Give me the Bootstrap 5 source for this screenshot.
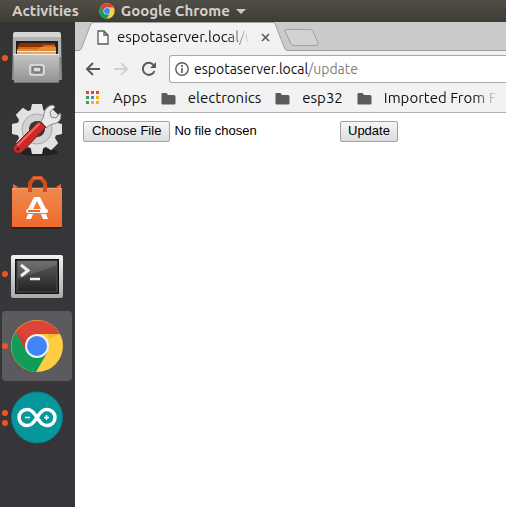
<!DOCTYPE html>
<html lang="en">
<head>
<meta charset="utf-8">
<meta name="viewport" content="width=device-width, initial-scale=1">
<title>espotaserver.local/update</title>
<link href="https://cdn.jsdelivr.net/npm/bootstrap@5.3.0/dist/css/bootstrap.min.css" rel="stylesheet">
<style>
body { font-family: Ubuntu, "Noto Sans", sans-serif; font-size: 15px; line-height: 20px; color: #111; }
svg { display: block; flex: none; }
button { font: inherit; color: inherit; }
.plain { background: none; border: 0; padding: 0; }
.topbar { height: 22px; background: linear-gradient(#504e46, #3e3c36); color: #d3d0c9; font-weight: 700; line-height: 18px; padding: 0 12px; gap: 20px; }
.topbar button { line-height: 18px; gap: 6px; }
.dock { width: 75px; background: linear-gradient(#323434, #37373b 60%, #353438); padding: 1px 3px 0 2px; gap: 2px; }
.launcher { height: 70px; border-radius: 4px; }
.launcher.active { background: #5b5b5e; }
.dots { left: 0; top: 0; bottom: 0; gap: 4px; }
.dots i { width: 6px; height: 6px; border-radius: 50%; background: #f05423; }
.tabstrip { height: 29px; background: #cacaca; box-shadow: inset 0 -1px #a0a0a0; }
.lead-in { width: 4px; }
.page-tab { width: 180px; background: #f2f2f2; border-top: 1px solid #a0a0a0; padding: 0 4px; gap: 8px; }
.tab-title { white-space: nowrap; -webkit-mask-image: linear-gradient(90deg, #000 80%, transparent 98%); mask-image: linear-gradient(90deg, #000 80%, transparent 98%); }
.newtab { margin: 0 0 0 -3px; }
.toolbar { height: 35px; background: #f2f2f2; padding-left: 10px; gap: 12px; }
.address { height: 28px; background: #fff; border: 1px solid #a9a9a9; border-right: 0; border-radius: 3px 0 0 3px; padding-left: 5px; gap: 5px; font-size: 14px; }
.address span span { color: #808080; }
.bookmarks { height: 27px; background: #f2f2f2; border-bottom: 1px solid #b0b0b0; padding: 0 0 2px 11px; gap: 14px; white-space: nowrap; }
.bookmarks a { color: #111; gap: 12px; }
.bookmarks a:first-child { gap: 13px; }
.fade-end { -webkit-mask-image: linear-gradient(90deg, #000 80%, transparent); mask-image: linear-gradient(90deg, #000 80%, transparent); }
.upload { font: 13px/16px Arial, "Liberation Sans", sans-serif; color: #000; padding: 8px; gap: 4px; }
.upload input[type=file] { width: 253px; font: inherit; height: 21px; }
.upload input::file-selector-button, .upload button { font: inherit; color: #000; height: 21px; padding: 0 7px 1px; border: 1px solid #a0a0a0; border-radius: 2px; background: linear-gradient(#f6f6f6, #dcdcdc); }
.upload input::file-selector-button { margin-right: 4px; padding: 0 8px 1px; }
</style>
</head>
<body class="vh-100 d-flex flex-column overflow-hidden">
<svg width="0" height="0" class="position-absolute" aria-hidden="true">
  <defs>
    <symbol id="chrome" viewBox="0 0 54 54">
      <circle cx="27" cy="27" r="26" fill="#ffcd40"/>
      <path d="M27 15H50A26 26 0 0 0 5.500 13L16 33 27 27Z" fill="#db4437"/>
      <path d="M5.500 13A26 26 0 0 0 26 53L37.500 33 27 27 16.500 33Z" fill="#0f9d58"/>
      <path d="M38 15H50L39 20Z" fill="#e2ad32" opacity=".6"/>
      <path d="M5.500 13 15.500 31 16 21Z" fill="#ab3830" opacity=".4"/>
      <circle cx="27" cy="27" r="12" fill="#f1f1f1"/><circle cx="27" cy="27" r="10" fill="#4285f4"/>
    </symbol>
    <symbol id="folder" viewBox="0 0 15 13"><path d="M1.500 1H5.500L7 3H13Q14.500 3 14.500 4.500V11Q14.500 12.500 13 12.500H1.500Q.500 12.500 .500 11V2Q.500 1 1.500 1Z" fill="#5a5a5a"/></symbol>
    <linearGradient id="steel" x2="0" y2="1"><stop stop-color="#c6c6c6"/><stop offset="1" stop-color="#929292"/></linearGradient>
    <linearGradient id="bag" x2="0" y2="1"><stop stop-color="#ed8950"/><stop offset="1" stop-color="#f06a2c"/></linearGradient>
    <linearGradient id="screen" x2="0" y2="1"><stop stop-color="#5d5d5d"/><stop offset="1" stop-color="#222"/></linearGradient>
    <linearGradient id="frame" x2="0" y2="1"><stop stop-color="#f2f2f2"/><stop offset="1" stop-color="#a9a9a9"/></linearGradient>
  </defs>
</svg>

<header class="topbar d-flex align-items-center flex-shrink-0">
  <button class="plain">Activities</button>
  <button class="plain d-flex align-items-center"><svg width="16" height="16"><use href="#chrome"/></svg>Google Chrome<svg width="10" height="5" viewBox="0 0 10 5"><path d="M0 0H10L5 5Z" fill="#ccc9c2"/></svg></button>
</header>

<div class="d-flex flex-grow-1">
  <nav class="dock d-flex flex-column flex-shrink-0" aria-label="Dock">
    <button class="plain launcher position-relative d-flex align-items-center justify-content-center" aria-label="Files">
      <span class="dots position-absolute d-flex flex-column justify-content-center"><i></i></span>
      <svg width="54" height="54" viewBox="0 0 54 54"><path d="M5 1H49Q51 1 51 3L52 49H2L3 3Q3 1 5 1Z" fill="#8f8f8f"/><path d="M5 1H49Q51 1 51 6H3Q3 1 5 1Z" fill="#d6d6d6"/><path d="M3 6H51V26H3Z" fill="#b2b2b2"/><path d="M6 10H48V25H6Z" fill="#202020"/><path d="M8 14 10 12H45V19H8Z" fill="#8d3000"/><path d="M8 16H32L34 14H45V24H8Z" fill="#cf6922"/><path d="M7 18H28L30 16H46V24H7Z" fill="#e08c3c"/><path d="M7 20H46V24H7Z" fill="#eaa762"/><path d="M7 20H46V21H7Z" fill="#fbe6c8"/><path d="M4 23H49V51H4Z" fill="url(#steel)"/><path d="M4 23H49V24H4Z" fill="#eee"/><path d="M4 51H49V52H4Z" fill="#777"/><rect x="20" y="34" width="14" height="10" rx="2" fill="#999" stroke="#e8e8e8" stroke-width="1.500"/><rect x="23" y="36" width="8" height="5" rx="1" fill="#ddd" stroke="#555"/></svg>
    </button>
    <button class="plain launcher d-flex align-items-center justify-content-center" aria-label="Settings">
      <svg width="54" height="54" viewBox="0 0 54 54"><ellipse cx="28" cy="49" rx="20" ry="4" fill="#222"/><g fill="#e2e2e2"><circle cx="27" cy="26" r="20"/><g id="teeth"><path d="M20 10 22 1H32L34 10V42L32 51H22L20 42Z"/></g><use href="#teeth" transform="rotate(45 27 26)"/><use href="#teeth" transform="rotate(90 27 26)"/><use href="#teeth" transform="rotate(135 27 26)"/></g><circle cx="27" cy="26" r="15" fill="#d2d2d2" stroke="#aaa"/><circle cx="27" cy="26" r="8" fill="#343637"/><path d="M31 18Q34 15 34 11 35 3 43 2L45 4 40 9 41 14 46 15 50 10 51 12Q51 20 43 21 39 22 36 25Z" fill="#e9e9e9" stroke="#888"/><path d="M29 18 36 24 13 48Q9 52 5 49 1 45 6 41Z" fill="#c92b28" stroke="#811a18"/><path d="M29 21 8 42" stroke="#ed6b60" stroke-width="2" stroke-linecap="round"/><circle cx="8" cy="46" r="1.500" fill="#35292a"/></svg>
    </button>
    <button class="plain launcher d-flex align-items-center justify-content-center" aria-label="Ubuntu Software">
      <svg width="54" height="54" viewBox="0 0 54 54"><path d="M2 51H52V54H2Z" fill="#242526"/><path d="M3 9 8 12H46L51 9V15H3Z" fill="#b43a15"/><path d="M3 9 8 12 3 14ZM51 9 46 12 51 14Z" fill="#ed6530"/><path d="M2 13H52V52H2Z" fill="url(#bag)"/><path d="M2 13H52V14H2Z" fill="#f49a66"/><path d="M20 17V8L24 3H31L35 8V17" fill="none" stroke="#d24c1e" stroke-width="4"/><path d="M23 3H32" stroke="#f06c37" stroke-width="2"/><path d="M24 22H30L36 34H31L27 26 23 34H18ZM18 39H23L21 44H16ZM31 39H36L38 44H33Z" fill="#fff"/><rect x="16" y="34" width="22" height="4" rx="2" fill="#fff"/><path d="M18 35H30V37H18Z" fill="#ed6b2e"/></svg>
    </button>
    <button class="plain launcher position-relative d-flex align-items-center justify-content-center" aria-label="Terminal">
      <span class="dots position-absolute d-flex flex-column justify-content-center"><i></i></span>
      <svg width="54" height="54" viewBox="0 0 54 54"><rect x="1" y="8" width="52" height="43" rx="2" fill="url(#frame)"/><rect x="5" y="12" width="44" height="35" fill="#111"/><rect x="7" y="14" width="40" height="31" fill="url(#screen)" stroke="#555"/><path d="M8 32 47 18V14H8Z" fill="#fff" opacity=".12"/><path d="M11 18 18 23.500 11 29" fill="none" stroke="#eee" stroke-width="3"/><path d="M20 32H30" stroke="#eee" stroke-width="2.500"/></svg>
    </button>
    <button class="plain launcher active position-relative d-flex align-items-center justify-content-center" aria-label="Google Chrome">
      <span class="dots position-absolute d-flex flex-column justify-content-center"><i></i></span>
      <svg width="54" height="54"><use href="#chrome"/></svg>
    </button>
    <button class="plain launcher position-relative d-flex align-items-center justify-content-center" aria-label="Arduino IDE">
      <span class="dots position-absolute d-flex flex-column justify-content-center"><i></i><i></i></span>
      <svg width="54" height="54" viewBox="0 0 54 54"><circle cx="27" cy="26.500" r="25.500" fill="#06979c" stroke="#087f85"/><path d="M27 26.500C23 20.500 21 18.500 17 18.500A8 8 0 0 0 17 34.500C21 34.500 23 32.500 27 26.500 31 20.500 33 18.500 37 18.500A8 8 0 0 1 37 34.500C33 34.500 31 32.500 27 26.500Z" fill="none" stroke="#fff" stroke-width="3.500"/><path d="M15 26.500H20M34 26.500H39M36.500 24V29" stroke="#fff" stroke-width="1.500"/></svg>
    </button>
  </nav>

  <div class="d-flex flex-column flex-grow-1 bg-white overflow-hidden">
    <div class="tabstrip d-flex flex-shrink-0">
      <div class="lead-in"></div>
      <svg width="14" height="29" viewBox="0 0 14 29"><path d="M0 29 2 27 12 2 14 .500V29Z" fill="#f2f2f2"/><path d="M0 28.500Q2 28 3 25L11 4Q12 .500 14 .500" fill="none" stroke="#a0a0a0"/></svg>
      <div class="page-tab d-flex align-items-center">
        <svg width="12" height="15" viewBox="0 0 12 15"><path d="M1 1H7L11 5V14H1ZM7 1V5H11" fill="#fafafa" stroke="#5a5a5a" stroke-width="1.300"/></svg>
        <span class="tab-title">espotaserver.local/u</span>
        <button class="plain ms-auto" aria-label="Close tab"><svg width="9" height="9" viewBox="0 0 9 9"><path d="M1 1 8 8M8 1 1 8" stroke="#5a5a5a" stroke-width="1.600"/></svg></button>
      </div>
      <svg width="14" height="29" viewBox="0 0 14 29"><path d="M0 .500 2 2 12 27 14 29H0Z" fill="#f2f2f2"/><path d="M0 .500Q2 .500 3 4L11 25Q12 28 14 28.500" fill="none" stroke="#a0a0a0"/></svg>
      <button class="plain newtab" aria-label="New tab"><svg width="36" height="29" viewBox="0 0 36 29"><path d="M2 7.500H26Q28 7.500 29 9.500L34 21Q34.500 23.500 32 23.500H10Q7.500 23.500 6.500 21L1 9Q.500 7.500 2 7.500Z" fill="#d2d2d2" stroke="#a0a0a0"/></svg></button>
    </div>
    <div class="toolbar d-flex align-items-center flex-shrink-0">
      <button class="plain" aria-label="Back"><svg width="16" height="16" viewBox="0 0 16 16"><path d="M15 8H2M8 2 2 8 8 14" fill="none" stroke="#5a5a5a" stroke-width="2"/></svg></button>
      <button class="plain" aria-label="Forward"><svg width="16" height="16" viewBox="0 0 16 16"><path d="M1 8H14M8 2 14 8 8 14" fill="none" stroke="#d0d0d0" stroke-width="2"/></svg></button>
      <button class="plain" aria-label="Reload"><svg width="16" height="16" viewBox="0 0 16 16"><path d="M13.500 10A6 6 0 1 1 12.500 4" fill="none" stroke="#5a5a5a" stroke-width="2"/><path d="M15 1V7H9Z" fill="#5a5a5a"/></svg></button>
      <div class="address d-flex align-items-center flex-grow-1">
        <svg width="14" height="14" viewBox="0 0 14 14"><circle cx="7" cy="7" r="6.200" fill="none" stroke="#5a5a5a" stroke-width="1.400"/><path d="M7 6V11M7 3V5" stroke="#5a5a5a" stroke-width="1.600"/></svg>
        <span>espotaserver.local<span>/update</span></span>
      </div>
    </div>
    <nav class="bookmarks d-flex align-items-center flex-shrink-0 overflow-hidden" aria-label="Bookmarks">
      <a href="#" class="d-flex align-items-center text-decoration-none"><svg width="14" height="14" viewBox="0 0 14 14"><path d="M0 0h3v3h-3zM5 0h3v3h-3zM10 0h3v3h-3z" fill="#ea4335"/><path d="M0 5h3v3h-3zM0 10h3v3h-3z" fill="#34a05a"/><path d="M5 5h3v3h-3z" fill="#4285f4"/><path d="M10 5h3v3h-3zM5 10h3v3h-3zM10 10h3v3h-3z" fill="#f5b214"/></svg>Apps</a>
      <a href="#" class="d-flex align-items-center text-decoration-none"><svg width="15" height="13"><use href="#folder"/></svg>electronics</a>
      <a href="#" class="d-flex align-items-center text-decoration-none"><svg width="15" height="13"><use href="#folder"/></svg>esp32</a>
      <a href="#" class="d-flex align-items-center text-decoration-none"><svg width="15" height="13"><use href="#folder"/></svg><span class="fade-end">Imported From F</span></a>
      <a href="#" aria-label="Bookmark"><svg width="14" height="14" viewBox="0 0 14 14"><circle cx="7" cy="7" r="6" fill="#d9d9bd" stroke="#77776a"/></svg></a>
    </nav>
    <form class="upload d-flex align-items-center">
      <input type="file" aria-label="Choose File">
      <button type="button">Update</button>
    </form>
  </div>
</div>
<script src="https://cdn.jsdelivr.net/npm/bootstrap@5.3.0/dist/js/bootstrap.bundle.min.js"></script>
</body>
</html>
